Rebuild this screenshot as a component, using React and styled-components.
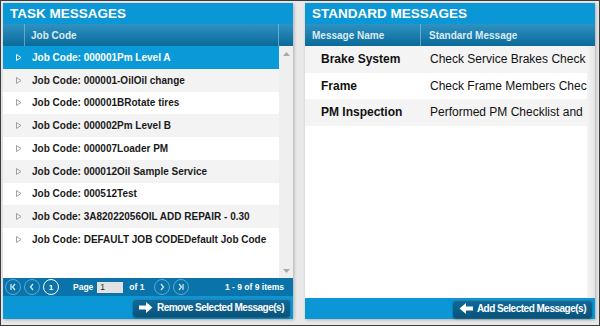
import * as React from 'react';
import styled, { createGlobalStyle } from 'styled-components';

const GlobalStyle = createGlobalStyle`
  body {
    margin: 0;
    font-family: "Liberation Sans", Arial, sans-serif;
  }
`;

const Frame = styled.div`
  width: 600px;
  height: 326px;
  box-sizing: border-box;
  border: 1px solid #3c3c3c;
  background: #e9e9e9;
  padding: 2px 4px 6px 2px;
  display: flex;
  gap: 12px;
`;

const Panel = styled.div`
  width: 290px;
  display: flex;
  flex-direction: column;
  background: #fff;
  box-shadow: 1px 1px 3px rgba(0, 0, 0, 0.25);
`;

const TitleBar = styled.div`
  height: 21px;
  line-height: 22px;
  background: #0b97d6;
  color: #fff;
  font-weight: bold;
  font-size: 13.5px;
  padding-left: 7px;
`;

const HeaderRow = styled.div`
  height: 22px;
  display: grid;
  grid-template-columns: ${(p) => p.cols};
  background: linear-gradient(#2e92c3, #0a6a9a);
  color: #dcebf4;
  font-size: 10px;
  font-weight: bold;
`;

const HeaderCell = styled.div`
  display: flex;
  align-items: center;
  padding-left: ${(p) => p.pad || 0}px;
  border-left: ${(p) => (p.divider ? '1px solid rgba(160, 205, 228, 0.55)' : 'none')};
`;

const Body = styled.div`
  flex: 1;
  display: flex;
  min-height: 0;
`;

const List = styled.div`
  flex: 1;
  overflow: hidden;
`;

const ScrollCol = styled.div`
  width: 14px;
  background: #efefef;
  display: flex;
  flex-direction: column;
  justify-content: space-between;
  align-items: center;
  padding: 6px 0 5px;
`;

const JobRow = styled.div`
  height: 22.75px;
  display: flex;
  align-items: center;
  background: ${(p) => (p.selected ? '#0b9ad8' : p.alt ? '#f3f3f3' : '#fff')};
  color: ${(p) => (p.selected ? '#fff' : '#1a1a1a')};
  font-size: 10px;
  font-weight: bold;
  white-space: nowrap;
  padding-left: 13px;
  gap: 10px;
`;

const Pager = styled.div`
  height: 18px;
  background: #0a74aa;
  display: flex;
  align-items: center;
  padding: 0 9px 0 2px;
  color: #fff;
  font-size: 8.5px;
  font-weight: bold;
`;

const Circle = styled.div`
  width: 14px;
  height: 14px;
  border-radius: 50%;
  border: 1px solid ${(p) => (p.current ? '#fff' : '#5aaad4')};
  display: flex;
  align-items: center;
  justify-content: center;
  margin-left: ${(p) => p.ml || 0}px;
  margin-right: ${(p) => p.mr || 3}px;
  color: #fff;
  font-size: 8px;
`;

const PageInput = styled.div`
  width: 26px;
  height: 11px;
  background: #e2e2e2;
  color: #222;
  font-weight: normal;
  font-size: 8.5px;
  line-height: 11px;
  padding-left: 3px;
  box-sizing: border-box;
  margin: 0 6px 0 4px;
`;

const PagerText = styled.span`
  margin-left: ${(p) => p.ml || '0'};
`;

const ActionBar = styled.div`
  height: ${(p) => p.h}px;
  background: #0b97d6;
  display: flex;
  align-items: center;
  justify-content: flex-end;
  padding-right: 3px;
`;

const ActionButton = styled.div`
  height: 18px;
  padding: 0 6px;
  border-radius: 3px;
  background: linear-gradient(#0e6b9c, #0a527a);
  box-shadow: inset 0 1px 0 rgba(255, 255, 255, 0.15), 0 1px 2px rgba(0, 0, 0, 0.45);
  display: flex;
  align-items: center;
  gap: 4px;
  color: #fff;
  font-weight: bold;
  font-size: 10px;
  letter-spacing: -0.5px;
`;

const Table = styled.div`
  flex: 1;
  overflow: hidden;
`;

const RightStrip = styled.div`
  width: 8px;
  background: linear-gradient(90deg, #f4f4f4, #e4e4e4);
`;

const MsgRow = styled.div`
  height: 26.5px;
  display: grid;
  grid-template-columns: 115px 1fr;
  align-items: center;
  background: ${(p) => (p.alt ? '#f4f4f4' : '#fff')};
  color: #111;
  font-size: 12px;
  white-space: nowrap;
`;

const MsgName = styled.div`
  font-weight: bold;
  padding-left: 16px;
`;

const MsgText = styled.div`
  padding-left: 10px;
  overflow: hidden;
`;

const Expand = ({ color }) => (
  <svg width="6" height="7" viewBox="0 0 6 7">
    <path d="M0.5 0.5 L5 3.5 L0.5 6.5 Z" fill="none" stroke={color} strokeWidth="1" />
  </svg>
);

const Tri = ({ up }) => (
  <svg width="7" height="4" viewBox="0 0 7 4">
    <path d={up ? 'M0 4 L3.5 0 L7 4 Z' : 'M0 0 L3.5 4 L7 0 Z'} fill="#a9a9a9" />
  </svg>
);

const Glyph = ({ d }) => (
  <svg width="8" height="8" viewBox="0 0 8 8">
    <path d={d} fill="none" stroke="#d8ecf6" strokeWidth="1.2" />
  </svg>
);

const Arrow = ({ left }) => (
  <svg width="14" height="11" viewBox="0 0 14 11" style={left ? { transform: 'scaleX(-1)' } : undefined}>
    <path d="M0 3.5 H7 V0 L13.5 5.5 L7 11 V7.5 H0 Z" fill="#fff" />
  </svg>
);

const jobs = [
  'Job Code: 000001Pm Level A',
  'Job Code: 000001-OilOil change',
  'Job Code: 000001BRotate tires',
  'Job Code: 000002Pm Level B',
  'Job Code: 000007Loader PM',
  'Job Code: 000012Oil Sample Service',
  'Job Code: 000512Test',
  'Job Code: 3A82022056OIL ADD REPAIR - 0.30',
  'Job Code: DEFAULT JOB CODEDefault Job Code',
];

const messages = [
  ['Brake System', 'Check Service Brakes Check'],
  ['Frame', 'Check Frame Members Chec'],
  ['PM Inspection', 'Performed PM Checklist and'],
];

export default function App() {
  return (
    <>
      <GlobalStyle />
      <Frame>
        <Panel>
          <TitleBar>TASK MESSAGES</TitleBar>
          <HeaderRow cols="21px 1fr 15px">
            <HeaderCell />
            <HeaderCell divider pad={6}>Job Code</HeaderCell>
            <HeaderCell divider />
          </HeaderRow>
          <Body>
            <List>
              {jobs.map((j, i) => (
                <JobRow key={j} selected={i === 0} alt={i > 0 && i % 2 === 1}>
                  <Expand color={i === 0 ? '#fff' : '#a0a0a0'} />
                  {j}
                </JobRow>
              ))}
            </List>
            <ScrollCol>
              <Tri up />
              <Tri />
            </ScrollCol>
          </Body>
          <Pager>
            <Circle><Glyph d="M2 1 V7 M6 1 L3.5 4 L6 7" /></Circle>
            <Circle><Glyph d="M5 1 L2.5 4 L5 7" /></Circle>
            <Circle current mr={14}>1</Circle>
            <PagerText>Page</PagerText>
            <PageInput>1</PageInput>
            <PagerText>of 1</PagerText>
            <Circle ml={10}><Glyph d="M3 1 L5.5 4 L3 7" /></Circle>
            <Circle><Glyph d="M2 1 L4.5 4 L2 7 M6 1 V7" /></Circle>
            <PagerText ml="auto">1 - 9 of 9 items</PagerText>
          </Pager>
          <ActionBar h={23}>
            <ActionButton>
              <Arrow />
              Remove Selected Message(s)
            </ActionButton>
          </ActionBar>
        </Panel>
        <Panel>
          <TitleBar>STANDARD MESSAGES</TitleBar>
          <HeaderRow cols="115px 1fr">
            <HeaderCell pad={7}>Message Name</HeaderCell>
            <HeaderCell divider pad={8}>Standard Message</HeaderCell>
          </HeaderRow>
          <Body>
            <Table>
              {messages.map(([n, m], i) => (
                <MsgRow key={n} alt={i % 2 === 0}>
                  <MsgName>{n}</MsgName>
                  <MsgText>{m}</MsgText>
                </MsgRow>
              ))}
            </Table>
            <RightStrip />
          </Body>
          <ActionBar h={21}>
            <ActionButton>
              <Arrow left />
              Add Selected Message(s)
            </ActionButton>
          </ActionBar>
        </Panel>
      </Frame>
    </>
  );
}
